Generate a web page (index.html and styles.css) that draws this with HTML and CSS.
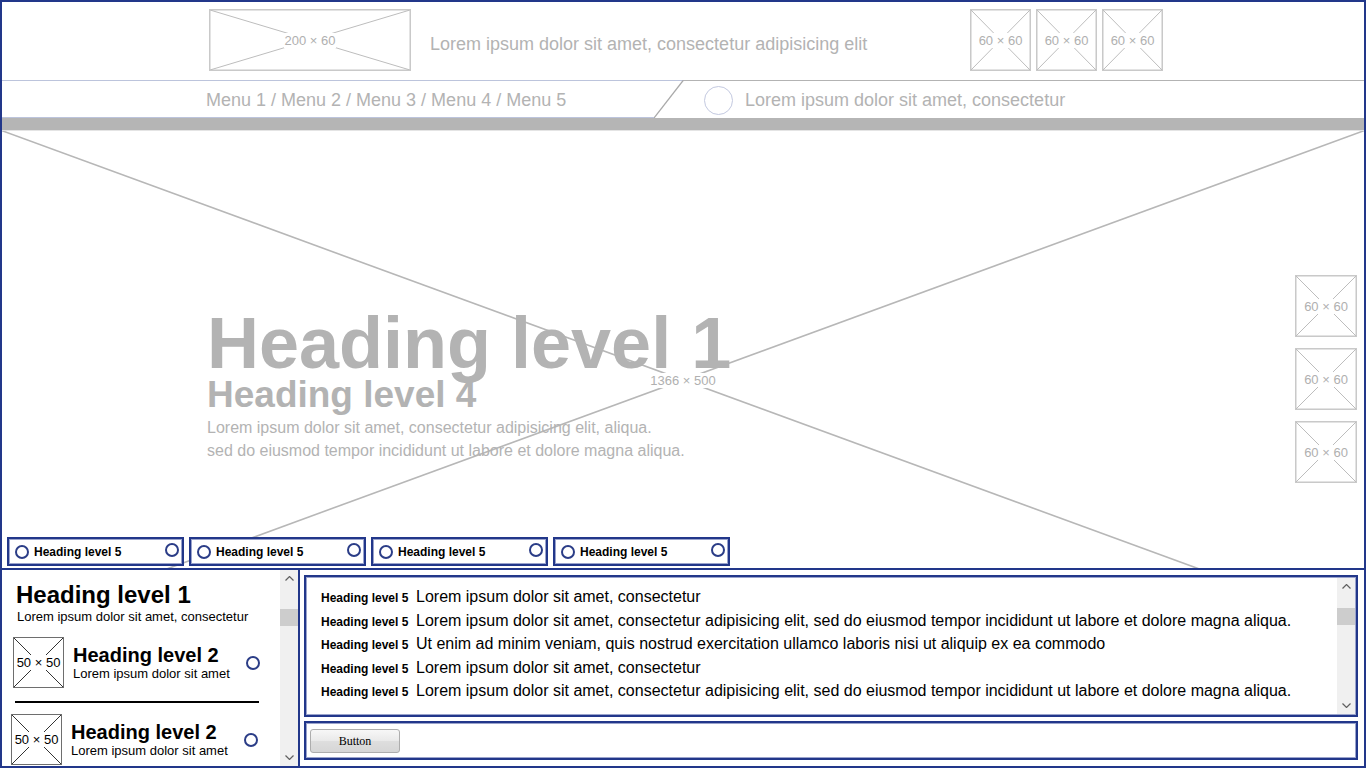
FILE: index.html
```html
<!DOCTYPE html>
<html lang="en">
<head>
<meta charset="utf-8">
<title>Wireframe</title>
<link rel="stylesheet" href="styles.css">
</head>
<body>
<div class="page">
  <header class="header">
    <div class="ph ph-logo">
      <svg viewBox="0 0 100 100" preserveAspectRatio="none"><line x1="0" y1="0" x2="100" y2="100"/><line x1="100" y1="0" x2="0" y2="100"/></svg>
      <span class="ph-label">200 × 60</span>
    </div>
    <p class="header-title">Lorem ipsum dolor sit amet, consectetur adipisicing elit</p>
    <div class="header-icons">
      <div class="ph ph-sq"><svg viewBox="0 0 100 100" preserveAspectRatio="none"><line x1="0" y1="0" x2="100" y2="100"/><line x1="100" y1="0" x2="0" y2="100"/></svg><span class="ph-label">60 × 60</span></div>
      <div class="ph ph-sq"><svg viewBox="0 0 100 100" preserveAspectRatio="none"><line x1="0" y1="0" x2="100" y2="100"/><line x1="100" y1="0" x2="0" y2="100"/></svg><span class="ph-label">60 × 60</span></div>
      <div class="ph ph-sq"><svg viewBox="0 0 100 100" preserveAspectRatio="none"><line x1="0" y1="0" x2="100" y2="100"/><line x1="100" y1="0" x2="0" y2="100"/></svg><span class="ph-label">60 × 60</span></div>
    </div>
  </header>

  <nav class="nav">
    <div class="nav-left">Menu 1 / Menu 2 / Menu 3 / Menu 4 / Menu 5</div>
    <svg class="nav-slant" viewBox="0 0 30 38"><line class="slant-top" x1="0" y1="0.5" x2="30" y2="0.5"/><line class="slant-diag" x1="29.5" y1="0" x2="0" y2="38"/></svg>
    <div class="nav-right"><span class="nav-circle"></span><span>Lorem ipsum dolor sit amet, consectetur</span></div>
  </nav>
  <div class="bar"></div>

  <section class="hero">
    <div class="hero-bg">
      <svg viewBox="0 0 100 100" preserveAspectRatio="none"><line x1="0" y1="0" x2="100" y2="100"/><line x1="100" y1="0" x2="0" y2="100"/></svg>
      <span class="ph-label">1366 × 500</span>
    </div>
    <div class="hero-main">
      <div class="hero-text">
        <h1 class="hero-h1">Heading level 1</h1>
        <h4 class="hero-h4">Heading level 4</h4>
        <p class="hero-p">Lorem ipsum dolor sit amet, consectetur adipisicing elit, aliqua.<br>sed do eiusmod tempor incididunt ut labore et dolore magna aliqua.</p>
      </div>
      <div class="hero-side">
        <div class="ph ph-sq ph-side"><svg viewBox="0 0 100 100" preserveAspectRatio="none"><line x1="0" y1="0" x2="100" y2="100"/><line x1="100" y1="0" x2="0" y2="100"/></svg><span class="ph-label">60 × 60</span></div>
        <div class="ph ph-sq ph-side"><svg viewBox="0 0 100 100" preserveAspectRatio="none"><line x1="0" y1="0" x2="100" y2="100"/><line x1="100" y1="0" x2="0" y2="100"/></svg><span class="ph-label">60 × 60</span></div>
        <div class="ph ph-sq ph-side"><svg viewBox="0 0 100 100" preserveAspectRatio="none"><line x1="0" y1="0" x2="100" y2="100"/><line x1="100" y1="0" x2="0" y2="100"/></svg><span class="ph-label">60 × 60</span></div>
      </div>
    </div>
    <div class="tabs">
      <div class="tab"><span class="dot"></span><span class="tab-label">Heading level 5</span><span class="dot dot-right"></span></div>
      <div class="tab"><span class="dot"></span><span class="tab-label">Heading level 5</span><span class="dot dot-right"></span></div>
      <div class="tab"><span class="dot"></span><span class="tab-label">Heading level 5</span><span class="dot dot-right"></span></div>
      <div class="tab"><span class="dot"></span><span class="tab-label">Heading level 5</span><span class="dot dot-right"></span></div>
    </div>
  </section>

  <section class="bottom">
    <aside class="side">
      <div class="side-content">
        <h1 class="side-title">Heading level 1</h1>
        <p class="side-sub">Lorem ipsum dolor sit amet, consectetur</p>
        <div class="item">
          <div class="ph ph-50"><svg viewBox="0 0 100 100" preserveAspectRatio="none"><line x1="0" y1="0" x2="100" y2="100"/><line x1="100" y1="0" x2="0" y2="100"/></svg><span class="ph-label">50 × 50</span></div>
          <div class="item-text">
            <h2 class="item-title">Heading level 2</h2>
            <p class="item-sub">Lorem ipsum dolor sit amet</p>
          </div>
          <span class="dot"></span>
        </div>
        <div class="sep"></div>
        <div class="item item-b">
          <div class="ph ph-50"><svg viewBox="0 0 100 100" preserveAspectRatio="none"><line x1="0" y1="0" x2="100" y2="100"/><line x1="100" y1="0" x2="0" y2="100"/></svg><span class="ph-label">50 × 50</span></div>
          <div class="item-text">
            <h2 class="item-title">Heading level 2</h2>
            <p class="item-sub">Lorem ipsum dolor sit amet</p>
          </div>
          <span class="dot"></span>
        </div>
      </div>
      <div class="scrollbar">
        <span class="sb-btn"><svg viewBox="0 0 9 5"><polyline points="0.5,4.5 4.5,0.5 8.5,4.5"/></svg></span>
        <span class="sb-thumb sb-thumb-side"></span>
        <span class="sb-btn sb-end"><svg viewBox="0 0 9 5"><polyline points="0.5,0.5 4.5,4.5 8.5,0.5"/></svg></span>
      </div>
    </aside>

    <div class="main">
      <div class="listbox">
        <ul class="rows">
          <li class="row"><span class="row-label">Heading level 5</span><span class="row-text">Lorem ipsum dolor sit amet, consectetur</span></li>
          <li class="row"><span class="row-label">Heading level 5</span><span class="row-text">Lorem ipsum dolor sit amet, consectetur adipisicing elit, sed do eiusmod tempor incididunt ut labore et dolore magna aliqua.</span></li>
          <li class="row"><span class="row-label">Heading level 5</span><span class="row-text">Ut enim ad minim veniam, quis nostrud exercitation ullamco laboris nisi ut aliquip ex ea commodo</span></li>
          <li class="row"><span class="row-label">Heading level 5</span><span class="row-text">Lorem ipsum dolor sit amet, consectetur</span></li>
          <li class="row"><span class="row-label">Heading level 5</span><span class="row-text">Lorem ipsum dolor sit amet, consectetur adipisicing elit, sed do eiusmod tempor incididunt ut labore et dolore magna aliqua.</span></li>
        </ul>
        <div class="scrollbar scrollbar-list">
          <span class="sb-btn"><svg viewBox="0 0 9 5"><polyline points="0.5,4.5 4.5,0.5 8.5,4.5"/></svg></span>
          <span class="sb-thumb sb-thumb-list"></span>
          <span class="sb-btn sb-end"><svg viewBox="0 0 9 5"><polyline points="0.5,0.5 4.5,4.5 8.5,0.5"/></svg></span>
        </div>
      </div>
      <div class="btnbox"><button class="btn" type="button">Button</button></div>
    </div>
  </section>
</div>
</body>
</html>
```

FILE: styles.css
```css
* { box-sizing: border-box; }
html, body { margin: 0; padding: 0; background: #fff; }
body { font-family: "Liberation Sans", Arial, sans-serif; }

.page {
  width: 1366px;
  height: 768px;
  border: 2px solid #22378a;
  overflow: hidden;
  display: flex;
  flex-direction: column;
  background: #fff;
}

/* placeholders */
.ph {
  display: grid;
  grid-template-rows: 100%;
  grid-template-columns: 100%;
  border: 1px solid #c9c9c9;
  box-shadow: inset 0 0 0 1px #e3e3e3;
  background: #fff;
  flex: none;
}
.ph > * { grid-area: 1 / 1; }
.ph svg { width: 100%; height: 100%; display: block; }
.ph line { stroke: #bdbdbd; stroke-width: 1; vector-effect: non-scaling-stroke; }
.ph-label {
  place-self: center;
  font-size: 13px;
  line-height: 15px;
  color: #b0b0b0;
  background: #fff;
  padding: 0 1px;
  white-space: nowrap;
}

/* header */
.header {
  height: 78px;
  flex: none;
  display: flex;
  align-items: flex-start;
  padding: 7px 0 0 207px;
}
.ph-logo { width: 202px; height: 62px; }
.header-title {
  margin: 24px 0 0 19px;
  width: 540px;
  font-size: 18px;
  line-height: 22px;
  color: #b3b3b3;
}
.header-icons { display: flex; gap: 5px; }
.ph-sq { width: 61px; height: 62px; }

/* nav */
.nav { height: 38px; flex: none; display: flex; }
.nav-left {
  width: 652px;
  border-top: 1px solid #bcc4dc;
  border-bottom: 1px solid #bcc4dc;
  padding: 2px 0 0 204px;
  display: flex;
  align-items: center;
  font-size: 18px;
  color: #b3b3b3;
  white-space: nowrap;
}
.nav-slant { width: 30px; height: 38px; flex: none; display: block; }
.slant-top { stroke: #bcc4dc; stroke-width: 1; }
.slant-diag { stroke: #a9a9a9; stroke-width: 1.3; }
.nav-right {
  flex: 1;
  border-top: 1px solid #b3b3b3;
  display: flex;
  align-items: center;
  gap: 12px;
  padding: 1px 0 0 20px;
  font-size: 18px;
  color: #b3b3b3;
  white-space: nowrap;
}
.nav-circle {
  width: 29px;
  height: 29px;
  border: 1.5px solid #c3c9e0;
  border-radius: 50%;
  flex: none;
}
.bar {
  height: 13px;
  flex: none;
  background: #b5b5b5;
  border-bottom: 1px solid #e4e4e4;
}

/* hero */
.hero {
  height: 437px;
  flex: none;
  position: relative;
  z-index: 0;
  overflow: hidden;
  display: flex;
  flex-direction: column;
}
.hero-bg {
  position: absolute;
  left: -2px;
  top: -1px;
  width: 1366px;
  height: 500px;
  z-index: -1;
  display: grid;
  grid-template-rows: 100%;
  grid-template-columns: 100%;
}
.hero-bg > * { grid-area: 1 / 1; }
.hero-bg svg { width: 100%; height: 100%; display: block; }
.hero-bg line { stroke: #b7b7b7; stroke-width: 1.6; vector-effect: non-scaling-stroke; }
.hero-main { flex: 1; display: flex; min-height: 0; }
.hero-text { margin-left: 205px; padding-top: 176px; color: #b3b3b3; }
.hero-h1 {
  margin: 0;
  font-size: 72px;
  line-height: 72px;
  font-weight: bold;
  white-space: nowrap;
}
.hero-h4 {
  margin: -3px 0 0;
  font-size: 37px;
  line-height: 37px;
  font-weight: bold;
}
.hero-p {
  margin: 3px 0 0;
  font-size: 16px;
  line-height: 23px;
}
.hero-side {
  margin-left: auto;
  margin-right: 7px;
  padding-top: 144px;
  display: flex;
  flex-direction: column;
  gap: 11px;
}
.ph-side { width: 62px; }

.tabs { display: flex; gap: 5px; padding: 0 0 2px 5px; flex: none; }
.tab {
  width: 177px;
  height: 29px;
  border: 2px solid #22378a;
  box-shadow: inset 0 0 0 1px #9aa3cc;
  background: #fff;
  display: flex;
  align-items: center;
  padding: 0 3px 0 6px;
}
.tab-label {
  margin-left: 5px;
  font-size: 12px;
  font-weight: bold;
  color: #000;
  white-space: nowrap;
}
.dot {
  width: 14px;
  height: 14px;
  border: 2px solid #2b3d87;
  border-radius: 50%;
  flex: none;
  display: block;
}
.dot-right { margin-left: auto; align-self: flex-start; margin-top: 4px; }

/* bottom */
.bottom {
  flex: 1;
  min-height: 0;
  display: flex;
  border-top: 2px solid #22378a;
}
.side {
  width: 298px;
  flex: none;
  border-right: 2px solid #22378a;
  display: flex;
  overflow: hidden;
}
.side-content {
  flex: 1;
  min-width: 0;
  padding: 11px 0 0 11px;
  overflow: hidden;
  color: #000;
}
.side-title {
  margin: 0;
  padding-left: 3px;
  font-size: 24px;
  line-height: 28px;
  font-weight: bold;
  white-space: nowrap;
}
.side-sub {
  margin: 0;
  padding-left: 4px;
  font-size: 13px;
  line-height: 16px;
  white-space: nowrap;
}
.item {
  display: flex;
  align-items: center;
  width: 247px;
  margin-top: 12px;
}
.item-b { margin-top: 11px; margin-left: -2px; }
.ph-50 {
  width: 51px;
  height: 51px;
  border: 1.5px solid #6e6e6e;
  box-shadow: none;
}
.ph-50 line { stroke: #333; }
.ph-50 .ph-label { color: #000; font-size: 13px; }
.item-text { margin-left: 9px; white-space: nowrap; }
.item-title { margin: 0; font-size: 20px; line-height: 22px; font-weight: bold; }
.item-sub { margin: 0; font-size: 13px; line-height: 16px; }
.item .dot { margin-left: auto; }
.sep {
  width: 244px;
  height: 2px;
  background: #000;
  margin: 13px 0 0 2px;
}

/* fake scrollbars */
.scrollbar {
  width: 18px;
  flex: none;
  background: #f0f0f0;
  display: flex;
  flex-direction: column;
}
.sb-btn {
  height: 17px;
  flex: none;
  display: flex;
  align-items: center;
  justify-content: center;
}
.sb-btn svg { width: 9px; height: 5px; display: block; }
.sb-btn polyline { fill: none; stroke: #606060; stroke-width: 1.2; }
.sb-end { margin-top: auto; }
.sb-thumb { height: 17px; flex: none; background: #cdcdcd; }
.sb-thumb-side { margin-top: 22px; }
.sb-thumb-list { margin-top: 13px; }
.scrollbar-list { margin: 1px; }

/* main panel */
.main {
  flex: 1;
  min-width: 0;
  display: flex;
  flex-direction: column;
  gap: 4px;
  padding: 5px 6px 0 4px;
}
.listbox {
  height: 142px;
  flex: none;
  border: 2px solid #22378a;
  box-shadow: inset 0 0 0 1px #9aa3cc;
  display: flex;
}
.rows {
  flex: 1;
  min-width: 0;
  list-style: none;
  margin: 0;
  padding: 8px 0 0 15px;
  overflow: hidden;
}
.row {
  display: flex;
  align-items: baseline;
  height: 23.6px;
  line-height: 23.6px;
  white-space: nowrap;
  color: #000;
}
.row-label { width: 95px; flex: none; font-size: 12px; line-height: 14px; font-weight: bold; }
.row-text { font-size: 16px; }

.btnbox {
  height: 39px;
  flex: none;
  border: 2px solid #22378a;
  box-shadow: inset 0 0 0 1px #9aa3cc;
  padding: 6px 4px;
}
.btn {
  display: block;
  width: 90px;
  height: 24px;
  margin: 0;
  padding: 0;
  font-family: "Liberation Serif", "Times New Roman", serif;
  font-size: 12px;
  color: #000;
  border: 1px solid #adadad;
  border-radius: 3px;
  background: linear-gradient(#f7f7f7, #e9e9e9 50%, #dedede 51%, #d6d6d6);
}
```
